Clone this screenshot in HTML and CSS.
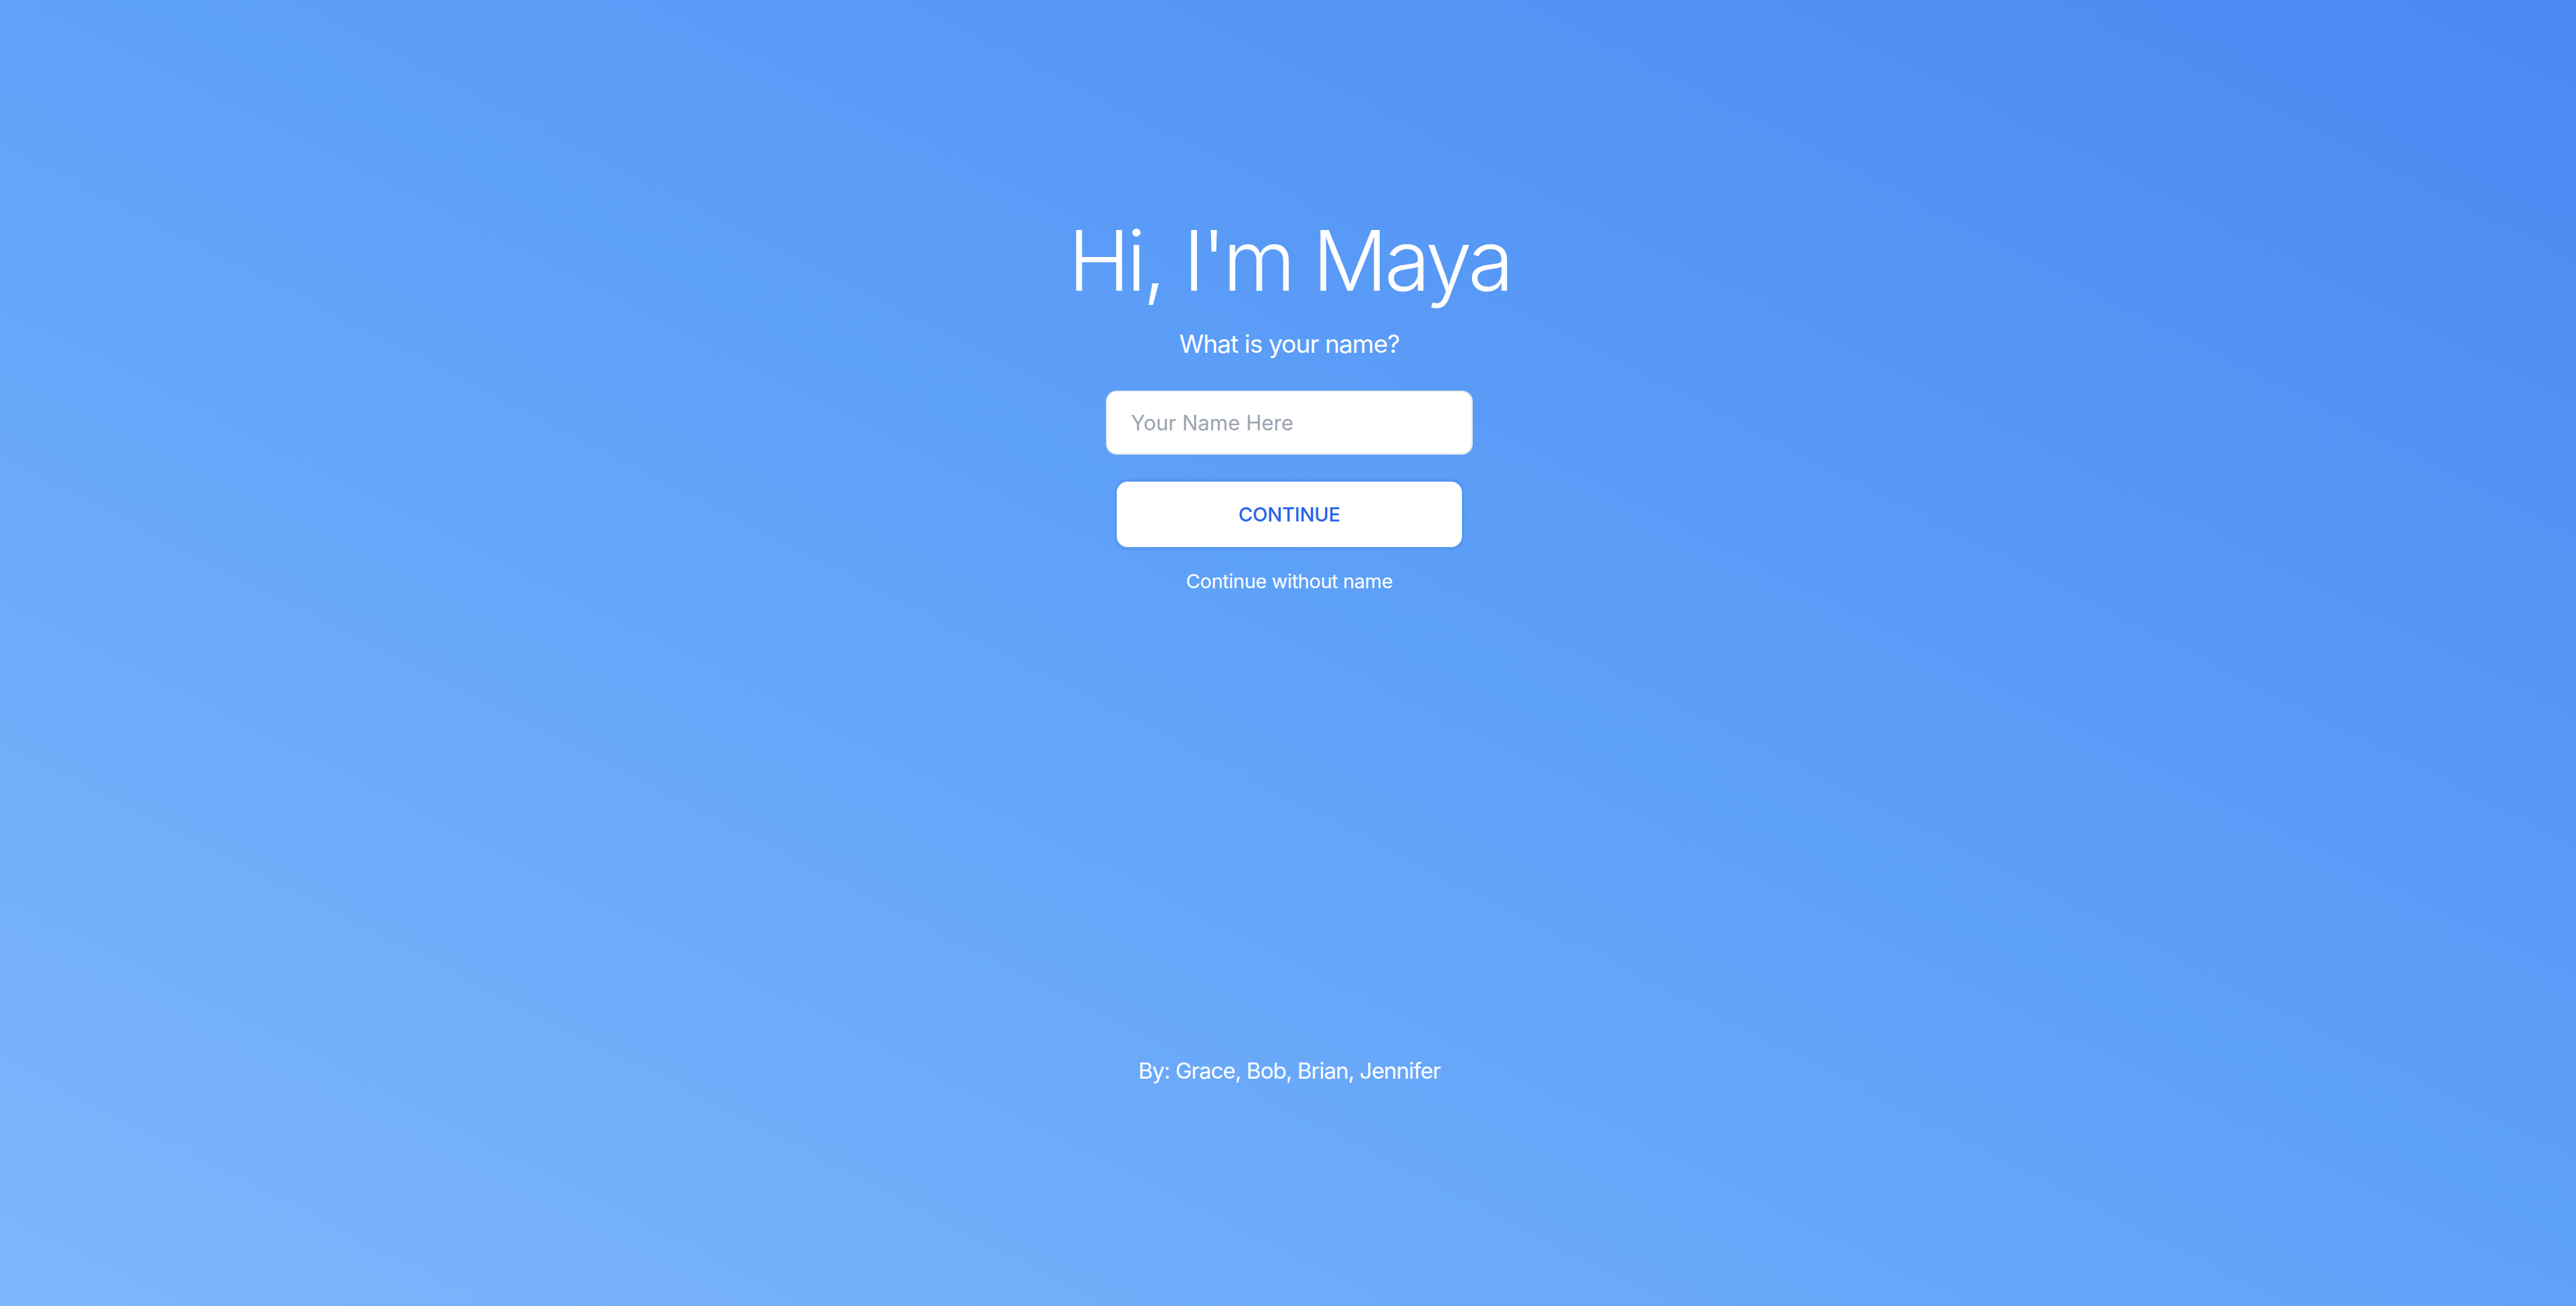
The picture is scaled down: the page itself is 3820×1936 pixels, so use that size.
FILE: index.html
```html
<!DOCTYPE html>
<html lang="en">
<head>
<meta charset="utf-8">
<title>Hi, I'm Maya</title>
<link rel="stylesheet" href="styles.css">
</head>
<body>
<div class="page">
  <main class="hero">
    <h1 class="title">Hi, I'm Maya</h1>
    <p class="subtitle">What is your name?</p>
    <input class="name-input" type="text" placeholder="Your Name Here">
    <button class="continue-btn" type="button">CONTINUE</button>
    <a class="skip-link" href="#">Continue without name</a>
  </main>
  <footer class="credits">By: Grace, Bob, Brian, Jennifer</footer>
</div>
</body>
</html>
```

FILE: styles.css
```css
html, body {
  margin: 0;
  padding: 0;
  height: 100%;
}

body {
  font-family: Inter, "Noto Sans", "Liberation Sans", sans-serif;
  color: #ffffff;
  background: linear-gradient(to top right, #7fb6fb 0%, #5fa2f8 50%, #4a89f2 100%);
}

.page {
  min-height: 100vh;
  display: flex;
  flex-direction: column;
  align-items: center;
  box-sizing: border-box;
  padding-left: 4px;
}

.hero {
  display: flex;
  flex-direction: column;
  align-items: center;
  padding-top: 312px;
}

.title {
  margin: 0;
  font-size: 124px;
  font-weight: 300;
  line-height: 1.2;
  letter-spacing: -5px;
}

.subtitle {
  margin: 27px 0 0;
  font-size: 37px;
  font-weight: 400;
  line-height: 1.2;
  letter-spacing: -1px;
}

.name-input {
  margin-top: 47px;
  width: 544px;
  height: 95px;
  box-sizing: border-box;
  border: 2px solid #e5e7eb;
  border-radius: 16px;
  padding: 0 35px;
  font-family: inherit;
  font-size: 31px;
  color: #111827;
  background: #ffffff;
  outline: none;
}

.name-input::placeholder {
  color: #9ca3af;
}

.continue-btn {
  margin-top: 40px;
  width: 512px;
  height: 97px;
  border: none;
  border-radius: 16px;
  background: #ffffff;
  box-shadow: 0 0 0 4px rgba(40, 100, 210, 0.12);
  font-family: inherit;
  font-size: 29px;
  font-weight: 500;
  letter-spacing: -0.3px;
  color: #2563eb;
  cursor: pointer;
}

.skip-link {
  margin-top: 34px;
  font-size: 29px;
  line-height: 1.2;
  letter-spacing: -0.5px;
  color: #ffffff;
  text-decoration: none;
}

.credits {
  margin-top: auto;
  padding-bottom: 328px;
  font-size: 33px;
  line-height: 1.2;
  letter-spacing: -1px;
}
```
